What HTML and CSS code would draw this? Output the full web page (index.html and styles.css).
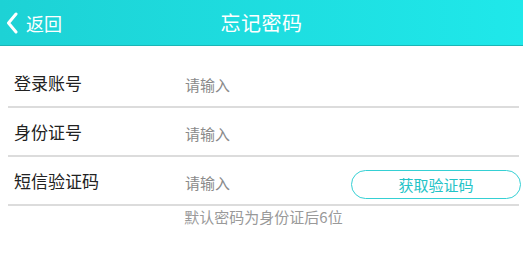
FILE: index.html
```html
<!DOCTYPE html>
<html lang="zh">
<head>
<meta charset="utf-8">
<title>忘记密码</title>
<link rel="stylesheet" href="styles.css">
</head>
<body>
<header class="topbar">
  <a class="back" href="#">
    <svg class="chev" width="12" height="22" viewBox="0 0 12 22"><path d="M10 2 L2.5 11 L10 20" fill="none" stroke="#fff" stroke-width="3" stroke-linecap="round" stroke-linejoin="round"/></svg>
    <span>返回</span>
  </a>
  <h1 class="title">忘记密码</h1>
</header>
<main class="form">
  <div class="row">
    <label class="label">登录账号</label>
    <span class="input">请输入</span>
  </div>
  <div class="row">
    <label class="label">身份证号</label>
    <span class="input">请输入</span>
  </div>
  <div class="row">
    <label class="label">短信验证码</label>
    <span class="input">请输入</span>
    <button class="code-btn">获取验证码</button>
  </div>
  <p class="hint">默认密码为身份证后6位</p>
</main>
</body>
</html>
```
FILE: styles.css
```css
* { box-sizing: border-box; }
html, body { margin: 0; padding: 0; background: #fff; }
body { font-family: "Noto Sans CJK SC", "Noto Sans", sans-serif; }
.topbar {
  position: relative;
  height: 46px;
  background: linear-gradient(to right, #1dd2d5, #1fe8ea);
  border-bottom: 1px solid #1bb5b5;
  display: flex;
  align-items: center;
  justify-content: center;
}
.back {
  position: absolute;
  left: 6px;
  top: 0;
  height: 45px;
  display: flex;
  align-items: center;
  gap: 8px;
  color: #fff;
  text-decoration: none;
  font-size: 18px;
}
.chev { display: block; }
.title {
  margin: 0;
  color: #fff;
  font-size: 20px;
  font-weight: 400;
  letter-spacing: 0.5px;
}
.form { padding: 13px 4px 0 8px; }
.row {
  height: 49px;
  display: flex;
  align-items: center;
  border-bottom: 2px solid #dcdcdc;
  padding-left: 6px;
}
.label {
  width: 171px;
  font-size: 17px;
  color: #222;
}
.input {
  font-size: 15px;
  color: #8a8a8a;
  flex: 1;
  padding-top: 4px;
}
.code-btn {
  width: 170px;
  height: 29px;
  margin-right: -2px;
  margin-top: 8px;
  border: 1.5px solid #35d0d4;
  border-radius: 15px;
  background: #fff;
  color: #22c3c7;
  font-family: inherit;
  font-size: 15px;
  padding: 0;
}
.hint {
  margin: 0;
  text-align: center;
  font-size: 15px;
  color: #999;
}
```
